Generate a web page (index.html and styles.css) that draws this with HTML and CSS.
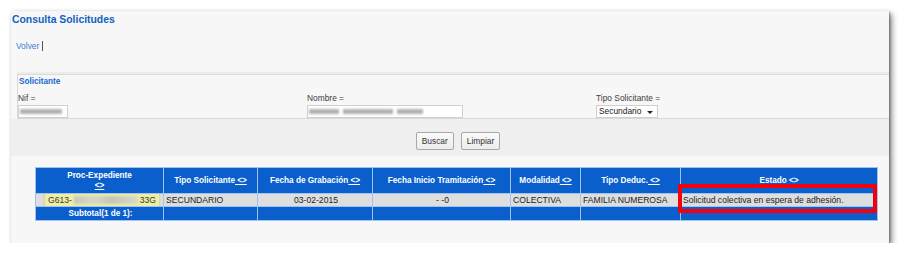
FILE: index.html
```html
<!DOCTYPE html>
<html lang="es">
<head>
<meta charset="utf-8">
<title>Consulta Solicitudes</title>
<link rel="stylesheet" href="styles.css">
</head>
<body>
<div class="panel">
  <div class="title">Consulta Solicitudes</div>
  <div class="nav"><a class="volver">Volver</a> <span class="sep"></span></div>
  <div class="fieldset">
    <div class="legend">Solicitante</div>
    <div class="fields">
      <div class="field">
        <div class="label">Nif =</div>
        <div class="input nif"><span class="blur b1"></span></div>
      </div>
      <div class="field">
        <div class="label">Nombre =</div>
        <div class="input nombre"><span class="blur b2"></span><span class="blur b3"></span><span class="blur b4"></span></div>
      </div>
      <div class="field">
        <div class="label">Tipo Solicitante =</div>
        <div class="select">Secundario <span class="arrow"></span></div>
      </div>
    </div>
  </div>
  <div class="band">
    <button class="btn">Buscar</button>
    <button class="btn">Limpiar</button>
  </div>
  <div class="tablewrap">
    <table class="grid">
      <colgroup>
        <col style="width:128px"><col style="width:94px"><col style="width:115px"><col style="width:138px"><col style="width:70px"><col style="width:100px"><col style="width:197px">
      </colgroup>
      <thead>
        <tr>
          <th>Proc-Expediente<br><a class="sort">&lt;&gt;</a></th>
          <th>Tipo Solicitante<a class="sort">&nbsp;&lt;&gt;</a></th>
          <th>Fecha de Grabación<a class="sort">&nbsp;&lt;&gt;</a></th>
          <th>Fecha Inicio Tramitación<a class="sort">&nbsp;&lt;&gt;</a></th>
          <th>Modalidad<a class="sort">&nbsp;&lt;&gt;</a></th>
          <th>Tipo Deduc.<a class="sort">&nbsp;&lt;&gt;</a></th>
          <th>Estado<a class="sort">&nbsp;&lt;&gt;</a></th>
        </tr>
      </thead>
      <tbody>
        <tr class="data">
          <td class="exp"><span class="hl"><span>G613-</span><span class="blurmid"></span><span>33G</span></span></td>
          <td>SECUNDARIO</td>
          <td class="c">03-02-2015</td>
          <td class="c">- -0</td>
          <td>COLECTIVA</td>
          <td>FAMILIA NUMEROSA</td>
          <td>Solicitud colectiva en espera de adhesión.</td>
        </tr>
        <tr class="sub">
          <td class="c">Subtotal(1 de 1):</td>
          <td></td><td></td><td></td><td></td><td></td><td></td>
        </tr>
      </tbody>
    </table>
    <div class="mark"></div>
  </div>
</div>
</body>
</html>
```
FILE: styles.css
```css
* { box-sizing: border-box; }
html, body { margin: 0; padding: 0; background: #ffffff; }
body { font-family: "Liberation Sans", Arial, sans-serif; color: #3a3a3a; }

.panel {
  margin: 11px 0 0 11px;
  width: 878px;
  height: 232px;
  background: #f7f7f7;
  box-shadow: 1px 1px 2px rgba(0,0,0,0.35), 3px 3px 6px rgba(0,0,0,0.45);
  overflow: hidden;
}

.title {
  padding: 3px 0 0 1px;
  font-size: 10.4px;
  line-height: 12px;
  font-weight: bold;
  color: #1160c4;
}

.nav {
  margin-top: 14px;
  padding-left: 5px;
  font-size: 8.4px;
  line-height: 12px;
  height: 12px;
  display: flex;
  align-items: center;
  gap: 3px;
}
.volver { color: #3b7fd0; }
.sep {
  display: block;
  width: 1px;
  height: 10px;
  background: #555555;
}

.fieldset {
  margin: 22px 0 0 6px;
  height: 45px;
  border: 1px solid #dadada;
  border-right: none;
  box-shadow: 0 -2px 0 #ececec;
  padding: 1px 0 0 0;
}
.legend {
  font-size: 8.2px;
  line-height: 12px;
  font-weight: bold;
  color: #1a68cc;
  padding-left: 1px;
}
.fields {
  margin-top: 4px;
  display: grid;
  grid-template-columns: 289px 289px 1fr;
}
.label {
  font-size: 8.4px;
  line-height: 12px;
  color: #404040;
}
.input {
  margin-top: 1px;
  height: 13px;
  background: #ffffff;
  border: 1px solid #d0d0d0;
  display: flex;
  align-items: center;
  gap: 4px;
  padding-left: 1px;
  overflow: hidden;
}
.input.nif { width: 50px; }
.input.nombre { width: 156px; }
.blur {
  display: block;
  height: 5px;
  background: #b2b2b2;
  filter: blur(1.3px);
}
.b1 { width: 42px; }
.b2 { width: 30px; }
.b3 { width: 50px; }
.b4 { width: 26px; }

.select {
  margin-top: 1px;
  width: 62px;
  height: 13px;
  background: #ffffff;
  border: 1px solid #cfcfcf;
  font-size: 8.4px;
  line-height: 11px;
  color: #222;
  padding-left: 2px;
  position: relative;
}
.arrow {
  position: absolute;
  right: 4px;
  top: 5px;
  width: 0; height: 0;
  border-left: 3px solid transparent;
  border-right: 3px solid transparent;
  border-top: 3px solid #222;
}

.band {
  height: 37px;
  background: #efefef;
  display: flex;
  justify-content: center;
  align-items: flex-start;
  gap: 7px;
  padding: 13px 0 0 16px;
}
.btn {
  height: 18px;
  padding: 0 5px;
  font-family: "Liberation Sans", Arial, sans-serif;
  font-size: 8.4px;
  color: #333;
  background: linear-gradient(#fafafa, #ececec);
  border: 1px solid #a8a8a8;
  border-radius: 2px;
}

.tablewrap {
  position: relative;
  margin: 11px 0 0 24px;
  width: 842px;
}
.grid {
  border-collapse: collapse;
  table-layout: fixed;
  width: 842px;
}
.grid th, .grid td {
  border: 1px solid #9fc2ee;
  padding: 0;
}
.grid th {
  height: 26px;
  background: #0b5fcc;
  color: #ffffff;
  font-size: 8.2px;
  line-height: 10px;
  font-weight: bold;
  text-align: center;
  vertical-align: middle;
  padding-top: 1px;
}
.sort { color: #ffffff; text-decoration: underline; }
.grid td {
  font-size: 8.6px;
  line-height: 11px;
  color: #222222;
  padding-left: 2px;
  white-space: nowrap;
  overflow: hidden;
}
.data td { height: 13px; background: #dedede; }
.sub td {
  height: 14px;
  background: #0b5fcc;
  color: #ffffff;
  font-weight: bold;
  font-size: 8.2px;
}
.c { text-align: center; }
.grid td.exp { padding-left: 9px; }
.hl {
  display: flex;
  align-items: center;
  width: 114px;
  height: 12px;
  background: #eeeea6;
  box-shadow: 0 0 2px 1px rgba(210,210,140,0.8);
  padding: 0 3px;
  color: #3a3a2a;
}
.blurmid {
  flex: 1;
  height: 8px;
  margin: 0 2px;
  background: linear-gradient(90deg, #c8c8b8, #d8d8c8 30%, #c6c6b6 60%, #dadac8);
  filter: blur(1px);
}

.mark {
  position: absolute;
  left: 643px;
  top: 17px;
  width: 199px;
  height: 29px;
  border: 4px solid #f3000a;
}
```
